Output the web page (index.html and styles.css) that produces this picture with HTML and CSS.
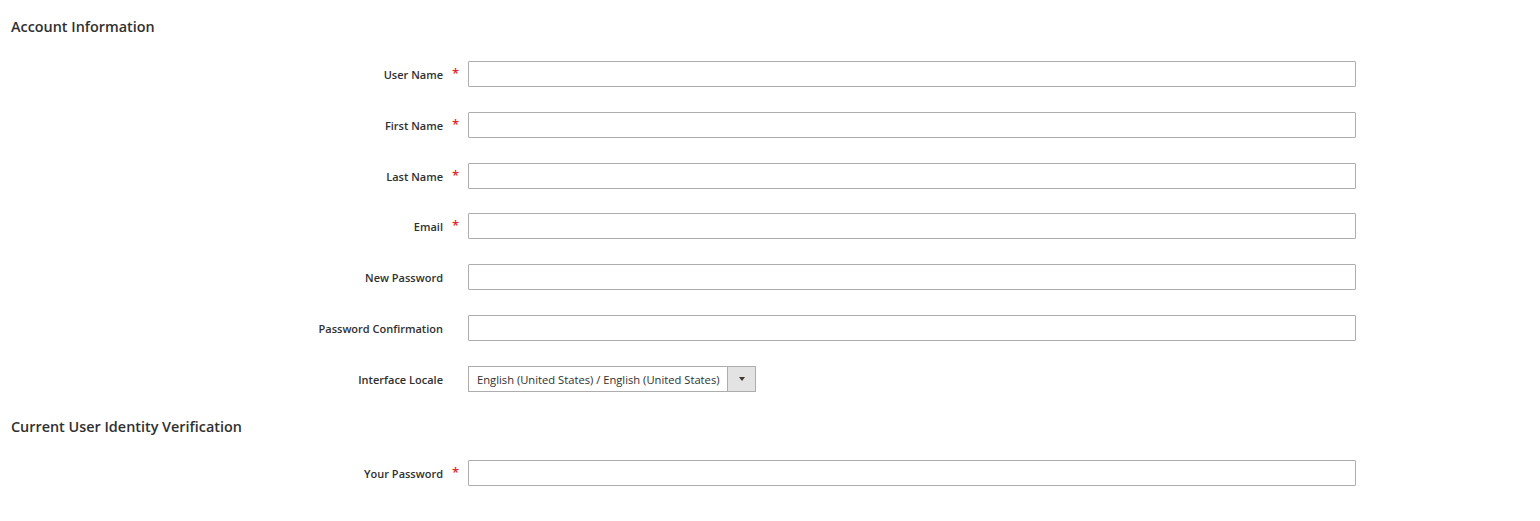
FILE: index.html
```html
<!DOCTYPE html>
<html lang="en">
<head>
    <meta charset="UTF-8">
    <meta name="viewport" content="width=device-width, initial-scale=1.0">
    <title>Account Setting</title>
    <link rel="stylesheet" href="styles.css">
</head>
<body>
    <form class="page">
        <fieldset class="section">
            <legend class="title">Account Information</legend>
            <div class="field required">
                <label class="label" for="username"><span>User Name</span></label>
                <div class="control"><input id="username" type="text"></div>
            </div>
            <div class="field required">
                <label class="label" for="firstname"><span>First Name</span></label>
                <div class="control"><input id="firstname" type="text"></div>
            </div>
            <div class="field required">
                <label class="label" for="lastname"><span>Last Name</span></label>
                <div class="control"><input id="lastname" type="text"></div>
            </div>
            <div class="field required">
                <label class="label" for="email"><span>Email</span></label>
                <div class="control"><input id="email" type="email"></div>
            </div>
            <div class="field">
                <label class="label" for="password"><span>New Password</span></label>
                <div class="control"><input id="password" type="password"></div>
            </div>
            <div class="field">
                <label class="label" for="confirmation"><span>Password Confirmation</span></label>
                <div class="control"><input id="confirmation" type="password"></div>
            </div>
            <div class="field">
                <label class="label" for="locale"><span>Interface Locale</span></label>
                <div class="control">
                    <div class="select">
                        <span class="select-value">English (United States) / English (United States)</span>
                        <span class="select-arrow"></span>
                    </div>
                </div>
            </div>
        </fieldset>
        <fieldset class="section">
            <legend class="title">Current User Identity Verification</legend>
            <div class="field required">
                <label class="label" for="current"><span>Your Password</span></label>
                <div class="control"><input id="current" type="password"></div>
            </div>
        </fieldset>
    </form>
</body>
</html>
```
FILE: styles.css
```css
*{
    box-sizing: border-box;
    font-family: "Open Sans", "Liberation Sans", sans-serif;
}
body{
    margin: 0;
    padding: 0;
    background-color: #fff;
    color: #303030;
}
.section{
    border: 0;
    margin: 0;
    padding: 0;
}
.title{
    display: block;
    float: left;
    width: 100%;
    padding: 17px 0 0 11px;
    margin: 0 0 24px;
    font-size: 14.4px;
    line-height: 20px;
    font-weight: 600;
    color: #303030;
}
.section + .section .title{
    padding-top: 0;
    margin-top: 0;
    margin-bottom: 23px;
}
.field{
    clear: both;
    display: flex;
    align-items: center;
    height: 26px;
    margin-bottom: 24.8px;
}
.label{
    width: 468px;
    flex: none;
    display: flex;
    justify-content: flex-end;
    padding-right: 25px;
    padding-top: 1px;
    font-size: 11px;
    font-weight: 600;
    color: #303030;
}
.required .label{
    padding-right: 0;
}
.required .label::after{
    content: '*';
    box-sizing: border-box;
    width: 25px;
    padding-left: 9px;
    color: #e22626;
    font-size: 13px;
    line-height: 13px;
}
.control{
    flex: none;
}
input{
    display: block;
    width: 888px;
    height: 26px;
    border: 1px solid #adadad;
    border-radius: 1px;
    padding: 0 8px;
    font-size: 11px;
    background-color: #fff;
}
.select{
    display: flex;
    width: 288px;
    height: 26px;
    border: 1px solid #adadad;
    font-size: 11.2px;
    color: #303030;
}
.select-value{
    flex: 1;
    padding-left: 8px;
    line-height: 25px;
}
.select-arrow{
    width: 28px;
    border-left: 1px solid #adadad;
    background-color: #e3e3e3;
    position: relative;
}
.select-arrow::after{
    content: '';
    position: absolute;
    left: 11px;
    top: 10px;
    border-left: 3px solid transparent;
    border-right: 3px solid transparent;
    border-top: 4px solid #41362f;
}
```
